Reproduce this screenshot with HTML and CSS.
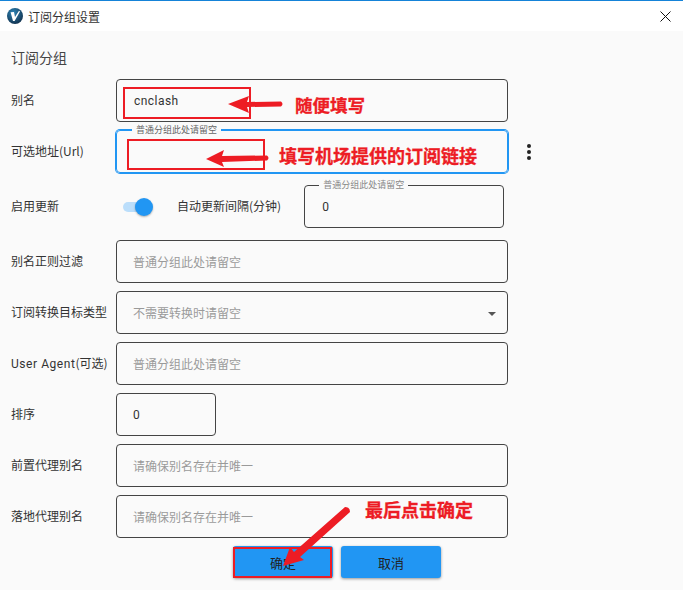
FILE: index.html
```html
<!DOCTYPE html>
<html lang="zh">
<head>
<meta charset="utf-8">
<title>订阅分组设置</title>
<link rel="stylesheet" href="styles.css">
</head>
<body>
<div class="window">
  <header class="titlebar">
    <svg class="logo" width="18" height="18" viewBox="0 0 18 18">
      <defs><radialGradient id="lg" cx="40%" cy="30%" r="75%"><stop offset="0" stop-color="#2b83b5"/><stop offset="1" stop-color="#12304c"/></radialGradient></defs>
      <circle cx="9" cy="9" r="8" fill="url(#lg)"/>
      <path d="M4.6 5.2 8 5 9 10 13 3.8 14 4.4 8.6 14 7 14Z" fill="#fff"/>
    </svg>
    <span class="title">订阅分组设置</span>
    <svg class="close" width="11" height="11" viewBox="0 0 11 11"><path d="M.5.5 10.5 10.5M10.5.5.5 10.5" stroke="#111" stroke-width="1" fill="none"/></svg>
  </header>
  <main class="content">
    <h2 class="heading">订阅分组</h2>
    <div class="row">
      <label class="label">别名</label>
      <div class="field wide"><span class="value">cnclash</span></div>
    </div>
    <div class="row row-url">
      <label class="label">可选地址(Url)</label>
      <div class="field wide focused"><span class="legend">普通分组此处请留空</span></div>
      <svg class="kebab" width="6" height="18" viewBox="0 0 6 18"><circle cx="3" cy="3" r="2"/><circle cx="3" cy="9" r="2"/><circle cx="3" cy="15" r="2"/></svg>
    </div>
    <div class="row row-update">
      <label class="label">启用更新</label>
      <div class="switch"><span class="track"></span><span class="thumb"></span></div>
      <span class="interval">自动更新间隔(分钟)</span>
      <div class="field number"><span class="legend legend-dark">普通分组此处请留空</span><span class="value">0</span></div>
    </div>
    <div class="row">
      <label class="label">别名正则过滤</label>
      <div class="field wide"><span class="placeholder">普通分组此处请留空</span></div>
    </div>
    <div class="row">
      <label class="label">订阅转换目标类型</label>
      <div class="field wide select"><span class="placeholder">不需要转换时请留空</span><span class="caret"></span></div>
    </div>
    <div class="row">
      <label class="label"><span class="latin">User Agent</span>(可选)</label>
      <div class="field wide"><span class="placeholder">普通分组此处请留空</span></div>
    </div>
    <div class="row">
      <label class="label">排序</label>
      <div class="field short"><span class="value">0</span></div>
    </div>
    <div class="row">
      <label class="label">前置代理别名</label>
      <div class="field wide"><span class="placeholder">请确保别名存在并唯一</span></div>
    </div>
    <div class="row">
      <label class="label">落地代理别名</label>
      <div class="field wide"><span class="placeholder">请确保别名存在并唯一</span></div>
    </div>
    <div class="actions">
      <button class="btn btn-ok">确定</button>
      <button class="btn btn-cancel">取消</button>
    </div>
  </main>

  <svg class="overlay" width="683" height="590" viewBox="0 0 683 590">
    <g fill="none" stroke="#ed1c24" stroke-width="2">
      <rect x="124" y="88" width="126" height="30"/>
      <rect x="128" y="140" width="136" height="29"/>
      <rect x="234" y="548" width="97" height="29"/>
    </g>
    <g fill="#ed1c24">
      <path d="M228 104 249 96 247 102 281 101.5Q284 104 281 106.5L247 107 249 113Z"/>
      <path d="M206 159 224 150 222 156 267 155.5Q270 158 267 160.5L222 162 224 167Z"/>
      <path d="M283 566 290 547 294 552 345 507Q350 507 350 512L300 557 304 560Z"/>
    </g>
  </svg>
  <span class="note note-1">随便填写</span>
  <span class="note note-2">填写机场提供的订阅链接</span>
  <span class="note note-3">最后点击确定</span>
</div>
</body>
</html>
```
FILE: styles.css
```css
* { box-sizing: border-box; }
html, body { margin: 0; padding: 0; }
body {
  font-family: "Noto Sans CJK SC", "Noto Sans", sans-serif;
  color: #333;
  background: #fafafa;
}
.window {
  position: relative;
  width: 683px;
  height: 590px;
  overflow: hidden;
  background: #fafafa;
}
.titlebar {
  display: flex;
  align-items: center;
  height: 31px;
  padding: 0 10px 0 6px;
  background: #fff;
  border-top: 1px solid #1583d8;
}
.logo { flex: none; }
.title { margin-left: 4px; font-size: 12px; color: #333; }
.close { margin-left: auto; margin-right: 2px; }
.content { padding: 16px 0 0 11px; }
.heading {
  margin: 0 0 12px;
  height: 20px;
  line-height: 20px;
  font-size: 14px;
  font-weight: 400;
  color: #444;
}
.row {
  display: flex;
  align-items: center;
  height: 43px;
  margin-bottom: 8px;
}
.row-url { margin-bottom: 12px; }
.row-update { margin-bottom: 12px; }
.label {
  flex: none;
  width: 105px;
  padding-bottom: 2px;
  font-size: 12px;
  white-space: nowrap;
  color: #333;
}
.latin { font-family: Roboto, sans-serif; letter-spacing: .55px; }
.field {
  position: relative;
  display: flex;
  align-items: center;
  height: 43px;
  padding-left: 16px;
  border: 1px solid #444;
  border-radius: 4px;
  font-size: 12px;
}
.wide { width: 392px; }
.short { width: 100px; }
.number { width: 200px; margin-left: 23px; padding-left: 17px; }
.focused { border-color: #2196f3; box-shadow: 0 0 0 1px #2196f3; }
.value { margin-left: 1px; font-family: Roboto, sans-serif; font-size: 12px; letter-spacing: .45px; color: #333; }
.number .value { margin-left: 0; }
.short .value { margin-left: 0; }
.placeholder { color: #9a9a9a; }
.legend {
  position: absolute;
  left: 15px;
  top: -7px;
  padding: 0 4px;
  font-size: 9px;
  line-height: 12px;
  color: #666;
  background: #fafafa;
  white-space: nowrap;
}
.legend-dark { left: 14px; color: #888; }
.caret {
  position: absolute;
  right: 11px;
  top: 20px;
  width: 0;
  height: 0;
  border: 4px solid transparent;
  border-top: 4px solid #555;
  border-bottom: 0;
}
.switch { position: relative; flex: none; width: 32px; height: 20px; margin-left: 7px; }
.track {
  position: absolute;
  left: 0;
  top: 5px;
  width: 28px;
  height: 10px;
  border-radius: 5px;
  background: #bbdefb;
}
.thumb {
  position: absolute;
  left: 12px;
  top: 1px;
  width: 18px;
  height: 18px;
  border-radius: 50%;
  background: #2196f3;
  box-shadow: 0 1px 2px rgba(0,0,0,.3);
}
.interval { margin-left: 22px; padding-bottom: 2px; font-size: 12px; white-space: nowrap; color: #333; }
.kebab { margin-left: 18px; fill: #222; flex: none; }
.actions {
  display: flex;
  gap: 8px;
  margin-top: 1px;
  padding-left: 222px;
}
.btn {
  width: 100px;
  height: 32px;
  padding: 0;
  border: 0;
  border-radius: 3px;
  background: #2196f3;
  font-family: inherit;
  font-size: 13px;
  color: #222;
  box-shadow: 0 1px 3px rgba(0,0,0,.4);
}
.overlay { position: absolute; left: 0; top: 0; pointer-events: none; }
.note {
  position: absolute;
  font-size: 18px;
  line-height: 24px;
  font-weight: 700;
  color: #ed1c24;
  white-space: nowrap;
  -webkit-text-stroke: .3px #ed1c24;
}
.note-1 { left: 295px; top: 93px; font-size: 17.5px; }
.note-2 { left: 279px; top: 143px; }
.note-3 { left: 365px; top: 497px; }
```
